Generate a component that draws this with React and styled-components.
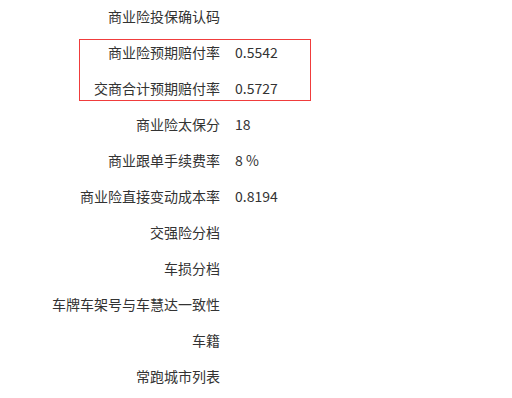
import React from 'react';
import styled, { createGlobalStyle } from 'styled-components';

const GlobalStyle = createGlobalStyle`
  body {
    margin: 0;
    background: #fff;
    font-family: "Noto Sans CJK SC", "Noto Sans", sans-serif;
  }
`;

const List = styled.div`
  display: flex;
  flex-direction: column;
  gap: 12px;
  padding-top: 4px;
  width: 512px;
`;

const Row = styled.div`
  display: flex;
  align-items: center;
  height: 24px;
  font-size: 14px;
  line-height: 24px;
  color: #333;
`;

const Label = styled.div`
  width: ${p => p.$width}px;
  flex-shrink: 0;
  text-align: right;
  white-space: nowrap;
`;

const Value = styled.div`
  margin-left: 15px;
  white-space: nowrap;
`;

// red frame around the loss-ratio rows
const Highlight = styled.div`
  display: flex;
  flex-direction: column;
  gap: 12px;
  margin: -1px 0 -1px 79px;
  width: 230px;
  border: 1px solid #f03c3c;
`;

const LABEL_W = 220;
const FRAME_LEFT = 80;

const Field = ({ label, value, inset = 0 }) => (
  <Row>
    <Label $width={LABEL_W - inset}>{label}</Label>
    {value !== undefined && <Value>{value}</Value>}
  </Row>
);

const before = [{ label: '商业险投保确认码' }];

const framed = [
  { label: '商业险预期赔付率', value: '0.5542' },
  { label: '交商合计预期赔付率', value: '0.5727' },
];

const after = [
  { label: '商业险太保分', value: '18' },
  { label: '商业跟单手续费率', value: '8 %' },
  { label: '商业险直接变动成本率', value: '0.8194' },
  { label: '交强险分档' },
  { label: '车损分档' },
  { label: '车牌车架号与车慧达一致性' },
  { label: '车籍' },
  { label: '常跑城市列表' },
];

export default function App() {
  return (
    <>
      <GlobalStyle />
      <List>
        {before.map(f => <Field key={f.label} {...f} />)}
        <Highlight>
          {framed.map(f => <Field key={f.label} {...f} inset={FRAME_LEFT} />)}
        </Highlight>
        {after.map(f => <Field key={f.label} {...f} />)}
      </List>
    </>
  );
}
